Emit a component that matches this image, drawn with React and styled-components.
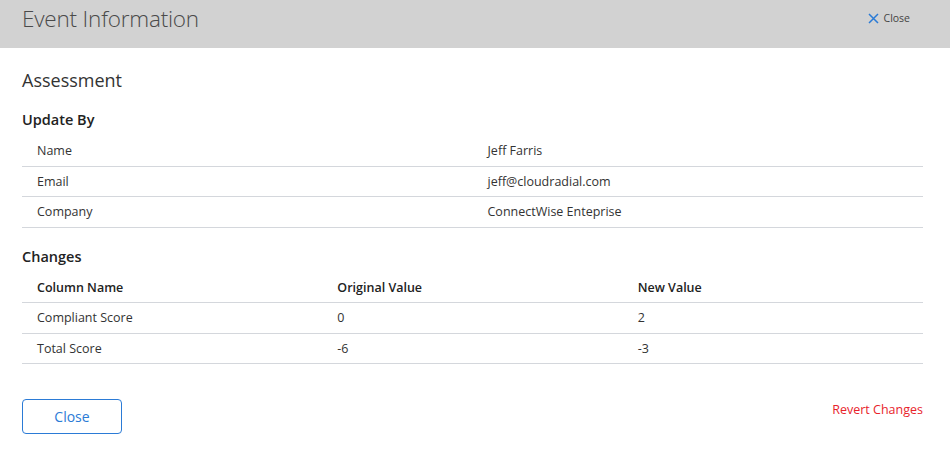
import React from 'react';
import styled, { createGlobalStyle } from 'styled-components';

const GlobalStyle = createGlobalStyle`
  body {
    margin: 0;
    background: #ffffff;
    font-family: "Segoe UI", "Open Sans", "Noto Sans", sans-serif;
    color: #333333;
  }
`;

const Modal = styled.div`
  width: 950px;
  height: 455px;
  background: #ffffff;
  overflow: hidden;
`;

const Header = styled.header`
  height: 48px;
  background: #d2d2d2;
  display: flex;
  align-items: center;
  justify-content: space-between;
  padding: 0 40px 0 22px;
  box-sizing: border-box;
`;

const Title = styled.h1`
  margin: 0 0 12px;
  font-size: 22.5px;
  font-weight: 300;
  color: #4a4a4a;
  letter-spacing: -0.2px;
`;

const CloseLink = styled.button`
  display: flex;
  align-items: center;
  gap: 5px;
  background: none;
  border: none;
  padding: 0;
  font-family: inherit;
  font-size: 10.5px;
  color: #444444;
  cursor: pointer;
  margin-bottom: 12px;
`;

const Body = styled.div`
  padding: 20px 27px 0 22px;
`;

const Heading = styled.h2`
  margin: 0 0 18px;
  font-size: 18px;
  font-weight: 400;
  color: #333333;
`;

const SubHeading = styled.h3`
  margin: 0 0 7px;
  font-size: 14.5px;
  font-weight: 600;
  color: #222222;
`;

const Table = styled.table`
  width: 100%;
  border-collapse: collapse;
  table-layout: fixed;
  font-size: 12.5px;
  color: #333333;
  margin-bottom: 19px;
`;

const Cell = styled.td`
  height: 29.5px;
  padding: 0 15px;
  border-bottom: 1px solid #d4d7dc;
  vertical-align: middle;
  font-weight: ${(p) => (p.$head ? 600 : 400)};
  color: ${(p) => (p.$head ? '#222222' : '#333333')};
`;

const Footer = styled.div`
  display: flex;
  justify-content: space-between;
  align-items: flex-start;
  padding-top: 16px;
`;

const OutlineButton = styled.button`
  width: 100px;
  height: 35px;
  border: 1px solid #2b7bd6;
  border-radius: 4px;
  background: #ffffff;
  color: #2b7bd6;
  font-family: inherit;
  font-size: 14px;
  cursor: pointer;
`;

const DangerLink = styled.button`
  background: none;
  border: none;
  padding: 0;
  margin-top: 2px;
  font-family: inherit;
  font-size: 12.5px;
  color: #e8232b;
  cursor: pointer;
`;

const updatedBy = [
  ['Name', 'Jeff Farris'],
  ['Email', 'jeff@cloudradial.com'],
  ['Company', 'ConnectWise Enteprise'],
];

const changes = [
  ['Compliant Score', '0', '2'],
  ['Total Score', '-6', '-3'],
];

const App = () => (
  <>
    <GlobalStyle />
    <Modal>
      <Header>
        <Title>Event Information</Title>
        <CloseLink>
          <svg width="11" height="11" viewBox="0 0 11 11">
            <path d="M1 1L10 10M10 1L1 10" stroke="#2b7bd6" strokeWidth="1.5" />
          </svg>
          Close
        </CloseLink>
      </Header>
      <Body>
        <Heading>Assessment</Heading>
        <SubHeading>Update By</SubHeading>
        <Table>
          <tbody>
            {updatedBy.map(([k, v]) => (
              <tr key={k}>
                <Cell>{k}</Cell>
                <Cell>{v}</Cell>
              </tr>
            ))}
          </tbody>
        </Table>
        <SubHeading>Changes</SubHeading>
        <Table>
          <tbody>
            <tr>
              <Cell $head>Column Name</Cell>
              <Cell $head>Original Value</Cell>
              <Cell $head>New Value</Cell>
            </tr>
            {changes.map(([name, a, b]) => (
              <tr key={name}>
                <Cell>{name}</Cell>
                <Cell>{a}</Cell>
                <Cell>{b}</Cell>
              </tr>
            ))}
          </tbody>
        </Table>
        <Footer>
          <OutlineButton>Close</OutlineButton>
          <DangerLink>Revert Changes</DangerLink>
        </Footer>
      </Body>
    </Modal>
  </>
);

export default App;
